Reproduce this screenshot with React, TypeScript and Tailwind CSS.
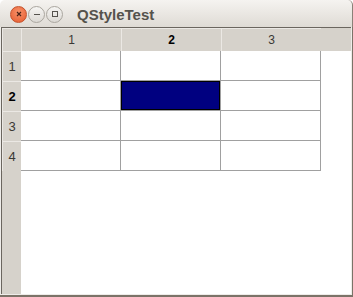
const cols = ['1', '2', '3'];
const rows = ['1', '2', '3', '4'];

function WinButton({ kind }: { kind: 'close' | 'min' | 'max' }) {
    if (kind === 'close') {
        return (
            <div className="w-[17px] h-[17px] rounded-full bg-[radial-gradient(circle_at_50%_35%,#f8926a,#e55a2e)] border border-[#c4522c] flex items-center justify-center">
                <svg width="8" height="8" viewBox="0 0 8 8">
                    <path d="M2 2 L6 6 M6 2 L2 6" stroke="#4a2216" strokeWidth="1.2" />
                </svg>
            </div>
        );
    }
    return (
        <div className="w-[17px] h-[17px] rounded-full bg-[linear-gradient(#f6f5f3,#dcd9d4)] border border-[#aaa69f] flex items-center justify-center">
            <svg width="8" height="8" viewBox="0 0 8 8">
                {kind === 'min' ? (
                    <path d="M1 4.5 H7" stroke="#55524d" strokeWidth="1" />
                ) : (
                    <rect x="1.5" y="1.5" width="5" height="5" fill="none" stroke="#55524d" strokeWidth="1" />
                )}
            </svg>
        </div>
    );
}

export default function App() {
    return (
        <div className="w-[353px] h-[297px] bg-white flex flex-col font-['Liberation_Sans',sans-serif]">
            {/* title bar */}
            <div className="h-[27px] shrink-0 rounded-t-[5px] bg-[linear-gradient(#f5f3f0,#dfdbd5)] border-r border-[#8a8178] flex items-center pl-[10px] pt-[1px]">
                <div className="flex items-center gap-[1px]">
                    <WinButton kind="close" />
                    <WinButton kind="min" />
                    <WinButton kind="max" />
                </div>
                <div className="ml-[14px] text-[15px] font-bold text-[#55524c] leading-none">QStyleTest</div>
            </div>

            {/* window body */}
            <div className="flex-1 flex flex-col pl-px pr-px pb-px bg-[#eeece9] border-r border-b-2 border-[#7b7368]">
                <div className="flex-1 flex flex-col bg-white border-l border-t border-[#6b665f] border-r-[#d6d2cb] border-b-[#d6d2cb]">
                    {/* horizontal header */}
                    <div className="h-[23px] flex shrink-0 bg-[#d6d2cb] text-[12px] text-[#3a3834]">
                        <div className="w-[19px] border-t border-l border-[#ebe8e4] border-r-[#6e6a63] border-b-[#6e6a63]" />
                        {cols.map((c) => (
                            <div
                                key={c}
                                className={`w-[100px] flex items-center justify-center border-t border-l border-[#ebe8e4] border-r-[#8a867f] border-b-[#6e6a63] ${c === '2' ? 'font-bold text-black' : ''}`}
                            >
                                {c}
                            </div>
                        ))}
                        <div className="flex-1" />
                    </div>

                    <div className="flex-1 flex">
                        {/* vertical header */}
                        <div className="w-[19px] bg-[#d6d2cb] flex flex-col text-[13px] text-[#3a3834]">
                            {rows.map((r) => (
                                <div
                                    key={r}
                                    className={`h-[30px] flex items-center justify-center border-t border-l border-[#ebe8e4] border-r-[#6e6a63] border-b-[#8a867f] ${r === '2' ? 'font-bold text-black' : ''}`}
                                >
                                    {r}
                                </div>
                            ))}
                        </div>

                        {/* cells */}
                        <div className="flex flex-col self-start">
                            {rows.map((r) => (
                                <div key={r} className="flex h-[30px]">
                                    {cols.map((c) => (
                                        <div key={c} className="w-[100px] border-r border-b border-[#a0a0a0]">
                                            {r === '2' && c === '2' && (
                                                <div className="h-full bg-[#000080] border border-black" />
                                            )}
                                        </div>
                                    ))}
                                </div>
                            ))}
                        </div>
                    </div>
                </div>
            </div>
        </div>
    );
}
